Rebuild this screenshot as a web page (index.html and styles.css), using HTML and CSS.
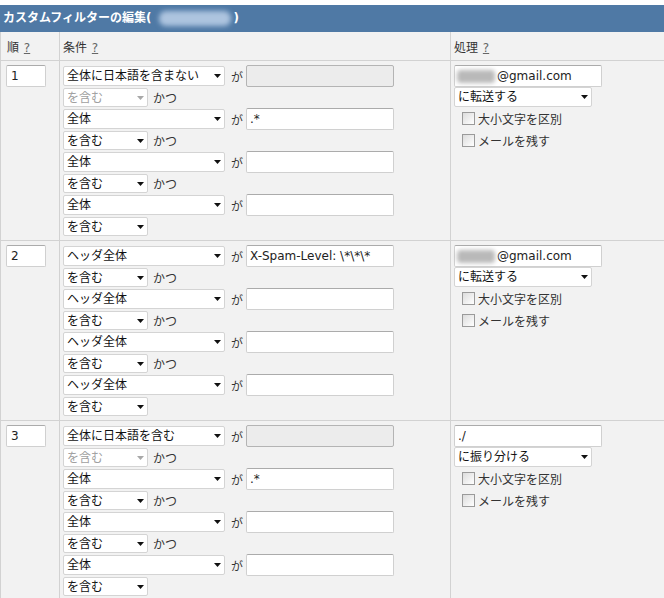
FILE: index.html
```html
<!DOCTYPE html>
<html lang="ja">
<head>
<meta charset="utf-8">
<title>カスタムフィルターの編集</title>
<link rel="stylesheet" href="styles.css">
</head>
<body>
<div class="page">
  <div class="title">カスタムフィルターの編集(<span class="blur-title"></span>)</div>
  <table class="grid">
    <colgroup><col class="c1"><col class="c2"><col class="c3"></colgroup>
    <thead>
      <tr>
        <th class="h1">順 <a class="help">?</a></th>
        <th class="h2">条件 <a class="help">?</a></th>
        <th class="h3">処理 <a class="help">?</a></th>
      </tr>
    </thead>
    <tbody>
      <tr>
        <td class="ord"><input class="txt num" value="1"></td>
        <td class="cond">
          <div class="l1"><div class="sel wide"><span>全体に日本語を含まない</span><svg class="arr" viewBox="0 0 7 4"><path d="M0 0h7L3.5 4z"/></svg></div><span class="ga">が</span><input class="txt field" disabled></div>
          <div class="l2"><div class="sel narrow dis"><span>を含む</span><svg class="arr" viewBox="0 0 7 4"><path d="M0 0h7L3.5 4z"/></svg></div><span class="katsu">かつ</span></div>
          <div class="l1"><div class="sel wide"><span>全体</span><svg class="arr" viewBox="0 0 7 4"><path d="M0 0h7L3.5 4z"/></svg></div><span class="ga">が</span><input class="txt field" value=".*"></div>
          <div class="l2"><div class="sel narrow"><span>を含む</span><svg class="arr" viewBox="0 0 7 4"><path d="M0 0h7L3.5 4z"/></svg></div><span class="katsu">かつ</span></div>
          <div class="l1"><div class="sel wide"><span>全体</span><svg class="arr" viewBox="0 0 7 4"><path d="M0 0h7L3.5 4z"/></svg></div><span class="ga">が</span><input class="txt field"></div>
          <div class="l2"><div class="sel narrow"><span>を含む</span><svg class="arr" viewBox="0 0 7 4"><path d="M0 0h7L3.5 4z"/></svg></div><span class="katsu">かつ</span></div>
          <div class="l1"><div class="sel wide"><span>全体</span><svg class="arr" viewBox="0 0 7 4"><path d="M0 0h7L3.5 4z"/></svg></div><span class="ga">が</span><input class="txt field"></div>
          <div class="l2"><div class="sel narrow"><span>を含む</span><svg class="arr" viewBox="0 0 7 4"><path d="M0 0h7L3.5 4z"/></svg></div></div>
        </td>
        <td class="act">
          <div class="txt addr"><span class="blur-mail"></span>@gmail.com</div>
          <div class="sel mid"><span>に転送する</span><svg class="arr" viewBox="0 0 7 4"><path d="M0 0h7L3.5 4z"/></svg></div>
          <label class="chk"><span class="box"></span>大小文字を区別</label>
          <label class="chk"><span class="box"></span>メールを残す</label>
        </td>
      </tr>
      <tr>
        <td class="ord"><input class="txt num" value="2"></td>
        <td class="cond">
          <div class="l1"><div class="sel wide"><span>ヘッダ全体</span><svg class="arr" viewBox="0 0 7 4"><path d="M0 0h7L3.5 4z"/></svg></div><span class="ga">が</span><input class="txt field" value="X-Spam-Level: \*\*\*"></div>
          <div class="l2"><div class="sel narrow"><span>を含む</span><svg class="arr" viewBox="0 0 7 4"><path d="M0 0h7L3.5 4z"/></svg></div><span class="katsu">かつ</span></div>
          <div class="l1"><div class="sel wide"><span>ヘッダ全体</span><svg class="arr" viewBox="0 0 7 4"><path d="M0 0h7L3.5 4z"/></svg></div><span class="ga">が</span><input class="txt field"></div>
          <div class="l2"><div class="sel narrow"><span>を含む</span><svg class="arr" viewBox="0 0 7 4"><path d="M0 0h7L3.5 4z"/></svg></div><span class="katsu">かつ</span></div>
          <div class="l1"><div class="sel wide"><span>ヘッダ全体</span><svg class="arr" viewBox="0 0 7 4"><path d="M0 0h7L3.5 4z"/></svg></div><span class="ga">が</span><input class="txt field"></div>
          <div class="l2"><div class="sel narrow"><span>を含む</span><svg class="arr" viewBox="0 0 7 4"><path d="M0 0h7L3.5 4z"/></svg></div><span class="katsu">かつ</span></div>
          <div class="l1"><div class="sel wide"><span>ヘッダ全体</span><svg class="arr" viewBox="0 0 7 4"><path d="M0 0h7L3.5 4z"/></svg></div><span class="ga">が</span><input class="txt field"></div>
          <div class="l2"><div class="sel narrow"><span>を含む</span><svg class="arr" viewBox="0 0 7 4"><path d="M0 0h7L3.5 4z"/></svg></div></div>
        </td>
        <td class="act">
          <div class="txt addr"><span class="blur-mail"></span>@gmail.com</div>
          <div class="sel mid"><span>に転送する</span><svg class="arr" viewBox="0 0 7 4"><path d="M0 0h7L3.5 4z"/></svg></div>
          <label class="chk"><span class="box"></span>大小文字を区別</label>
          <label class="chk"><span class="box"></span>メールを残す</label>
        </td>
      </tr>
      <tr>
        <td class="ord"><input class="txt num" value="3"></td>
        <td class="cond">
          <div class="l1"><div class="sel wide"><span>全体に日本語を含む</span><svg class="arr" viewBox="0 0 7 4"><path d="M0 0h7L3.5 4z"/></svg></div><span class="ga">が</span><input class="txt field" disabled></div>
          <div class="l2"><div class="sel narrow dis"><span>を含む</span><svg class="arr" viewBox="0 0 7 4"><path d="M0 0h7L3.5 4z"/></svg></div><span class="katsu">かつ</span></div>
          <div class="l1"><div class="sel wide"><span>全体</span><svg class="arr" viewBox="0 0 7 4"><path d="M0 0h7L3.5 4z"/></svg></div><span class="ga">が</span><input class="txt field" value=".*"></div>
          <div class="l2"><div class="sel narrow"><span>を含む</span><svg class="arr" viewBox="0 0 7 4"><path d="M0 0h7L3.5 4z"/></svg></div><span class="katsu">かつ</span></div>
          <div class="l1"><div class="sel wide"><span>全体</span><svg class="arr" viewBox="0 0 7 4"><path d="M0 0h7L3.5 4z"/></svg></div><span class="ga">が</span><input class="txt field"></div>
          <div class="l2"><div class="sel narrow"><span>を含む</span><svg class="arr" viewBox="0 0 7 4"><path d="M0 0h7L3.5 4z"/></svg></div><span class="katsu">かつ</span></div>
          <div class="l1"><div class="sel wide"><span>全体</span><svg class="arr" viewBox="0 0 7 4"><path d="M0 0h7L3.5 4z"/></svg></div><span class="ga">が</span><input class="txt field"></div>
          <div class="l2"><div class="sel narrow"><span>を含む</span><svg class="arr" viewBox="0 0 7 4"><path d="M0 0h7L3.5 4z"/></svg></div></div>
        </td>
        <td class="act">
          <input class="txt addr" value="./">
          <div class="sel mid"><span>に振り分ける</span><svg class="arr" viewBox="0 0 7 4"><path d="M0 0h7L3.5 4z"/></svg></div>
          <label class="chk"><span class="box"></span>大小文字を区別</label>
          <label class="chk"><span class="box"></span>メールを残す</label>
        </td>
      </tr>
    </tbody>
  </table>
</div>
</body>
</html>
```
FILE: styles.css
```css
html, body {
  margin: 0;
  padding: 0;
  background: #ffffff;
}
body {
  font-family: "DejaVu Sans", "Noto Sans CJK JP", sans-serif;
  font-size: 12px;
  color: #222;
}
.page {
  padding-top: 5px;
  width: 664px;
  overflow: hidden;
}
.title {
  background: #4f79a5;
  color: #fff;
  font-weight: bold;
  height: 27px;
  line-height: 27px;
  padding-left: 3px;
  display: flex;
  align-items: center;
  white-space: nowrap;
}
.blur-title {
  display: inline-block;
  width: 72px;
  height: 15px;
  margin: 0 3px 0 7px;
  background: #adc4df;
  border-radius: 7px;
  filter: blur(2.5px);
}
.grid {
  border-collapse: collapse;
  table-layout: fixed;
  width: 664px;
  background: #f2f2f2;
}
.c1 { width: 59px; }
.c2 { width: 391px; }
.c3 { width: 214px; }
.grid th, .grid td {
  border: 1px solid #d2d2d2;
  border-top: none;
  vertical-align: top;
}
.grid th {
  font-weight: normal;
  text-align: left;
  height: 28px;
  padding: 0 0 0 3px;
  vertical-align: middle;
  color: #333;
}
.grid th.h1 { padding-left: 6px; }
.help {
  color: #666;
  text-decoration: underline;
  margin-left: 1px;
}
.grid td {
  padding: 4px 0 3px 3px;
}
.grid td.ord {
  padding-left: 5px;
}
.txt {
  box-sizing: border-box;
  height: 22px;
  border: 1px solid #d0d0d0;
  border-top-color: #ababab;
  border-radius: 2px;
  background: #fff;
  font-family: "DejaVu Sans", "Noto Sans CJK JP", sans-serif;
  font-size: 12px;
  color: #222;
  padding: 0 3px;
  margin: 0;
  outline: none;
}
.txt:disabled {
  background: #ececec;
  border-color: #b4b4b4;
}
.num {
  width: 40px;
  padding-left: 4px;
  display: block;
}
.field { width: 148px; }
.l1 {
  display: flex;
  align-items: center;
  height: 22px;
}
.l2 {
  display: flex;
  align-items: center;
  height: 21px;
}
.sel {
  box-sizing: border-box;
  display: flex;
  align-items: center;
  justify-content: space-between;
  height: 20px;
  border: 1px solid #d4d4d4;
  border-radius: 2px;
  background: #fff;
  padding: 0 3px 0 3px;
  color: #111;
  white-space: nowrap;
  line-height: 18px;
}
.sel .arr {
  width: 7px;
  height: 4px;
  fill: #111;
  flex: none;
}
.sel.dis { color: #a0a0a0; }
.sel.dis .arr { fill: #a8a8a8; }
.wide { width: 162px; }
.narrow { width: 85px; height: 19px; }
.mid { width: 138px; }
.ga {
  margin: 0 3px 0 6px;
  color: #333;
}
.katsu {
  margin-left: 5px;
  color: #333;
}
.addr {
  width: 148px;
  display: flex;
  align-items: center;
  padding-left: 2px;
}
input.addr { display: block; padding-left: 3px; }
.blur-mail {
  display: inline-block;
  width: 38px;
  height: 13px;
  background: #b9b9b9;
  border-radius: 4px;
  filter: blur(2px);
  margin-right: 2px;
}
.chk {
  display: flex;
  align-items: center;
  height: 22px;
  padding-left: 8px;
  color: #333;
}
.chk .box {
  box-sizing: border-box;
  width: 13px;
  height: 13px;
  border: 1px solid #9a9a9a;
  background: linear-gradient(135deg, #dcdcdc, #ffffff);
  margin-right: 3px;
}
```
